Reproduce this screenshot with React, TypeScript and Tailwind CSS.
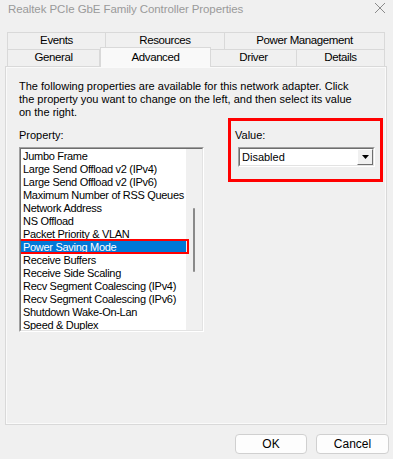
import React from "react";

const items = [
  "Jumbo Frame",
  "Large Send Offload v2 (IPv4)",
  "Large Send Offload v2 (IPv6)",
  "Maximum Number of RSS Queues",
  "Network Address",
  "NS Offload",
  "Packet Priority & VLAN",
  "Power Saving Mode",
  "Receive Buffers",
  "Receive Side Scaling",
  "Recv Segment Coalescing (IPv4)",
  "Recv Segment Coalescing (IPv6)",
  "Shutdown Wake-On-Lan",
  "Speed & Duplex",
];

const tabCls =
  "flex items-center justify-center border-t border-l border-r border-[#d9d9d9] bg-[#f0f0f0] text-[11.5px] text-black h-[17px] tracking-[-0.4px]";

export default function App() {
  return (
    <div
      className="w-[393px] h-[459px] bg-[#f0f0f0] overflow-hidden flex flex-col"
      style={{ fontFamily: '"Liberation Sans", Arial, sans-serif' }}
    >
      {/* title bar */}
      <div className="h-[20px] flex items-center justify-between pl-[8px] pr-[5px]">
        <span className="text-[11.5px] text-[#9a9a9a] tracking-[-0.1px]">
          Realtek PCIe GbE Family Controller Properties
        </span>
        <svg width="12" height="12" viewBox="0 0 12 12" className="mt-[-4px] mr-[2px]">
          <path d="M1 1 L11 11 M11 1 L1 11" stroke="#8a8a8a" strokeWidth="1" />
        </svg>
      </div>

      {/* tabs */}
      <div className="mt-[12px] ml-[7px] w-[378px] flex">
        <div className={`${tabCls} w-[99px]`}>Events</div>
        <div className={`${tabCls} w-[119px] border-l-0`}>Resources</div>
        <div className={`${tabCls} w-[160px] border-l-0`}>Power Management</div>
      </div>
      <div className="ml-[7px] w-[378px] flex items-end h-[17px]">
        <div className={`${tabCls} w-[93px]`}>General</div>
        <div className="relative z-10 w-[111px] h-[20px] -mt-[3px] bg-[#f9f9f9] border-t border-l border-r border-[#d9d9d9] flex items-start justify-center pt-[1px] text-[11.5px] tracking-[-0.4px] text-black mb-[-1px]">
          Advanced
        </div>
        <div className={`${tabCls} w-[86px] border-l-0`}>Driver</div>
        <div className={`${tabCls} w-[88px] border-l-0`}>Details</div>
      </div>

      {/* panel */}
      <div className="ml-[5px] w-[382px] h-[359px] border border-[#d9d9d9] bg-[#f0f0f0] shadow-[inset_0_0_0_1px_#fafafa] pt-[13px] pl-[13px]">
        <p className="text-[11px] leading-[13px] text-black w-[345px]">
          The following properties are available for this network adapter. Click
          the property you want to change on the left, and then select its value
          on the right.
        </p>
        <div className="flex mt-[-1px]">
          <div className="w-[185px] pt-[11px] flex flex-col">
            <span className="text-[11px] leading-[13px] text-black">Property:</span>
            <div className="mt-[5px] h-[185px] border-t border-l border-[#a0a0a0] border-r border-b border-r-white border-b-white">
              <div className="relative h-full border-t border-l border-[#6e6e6e] border-r border-b border-r-[#e3e3e3] border-b-[#e3e3e3] bg-white flex overflow-hidden">
                <div className="flex-1 flex flex-col pt-[1px] overflow-hidden">
                  {items.map((it) => (
                    <div
                      key={it}
                      className={
                        it === "Power Saving Mode"
                          ? "h-[13px] leading-[13px] text-[11px] tracking-[-0.3px] pl-[2px] bg-[#0078d7] text-white whitespace-nowrap"
                          : "h-[13px] leading-[13px] text-[11px] tracking-[-0.3px] pl-[2px] text-black whitespace-nowrap"
                      }
                    >
                      {it}
                    </div>
                  ))}
                </div>
                <div className="w-[16px] bg-[#f0f0f0] relative">
                  <div className="absolute left-[7px] top-[59px] w-[2px] h-[64px] rounded-full bg-[#8a8a8a]" />
                </div>
                <div className="absolute left-[-4px] top-[90px] w-[172px] h-[15px] border-2 border-[#ff0000]" />
              </div>
            </div>
          </div>
          <div className="ml-[24px] w-[155px] h-[64px] border-[3px] border-[#ff0000] pt-[8px] pl-[4px]">
            <span className="block text-[11px] leading-[13px] text-black">Value:</span>
            <div className="mt-[5px] ml-[3px] w-[137px] h-[20px] border-t border-l border-[#a0a0a0] border-r border-b border-r-white border-b-white">
              <div className="h-full flex border-t border-l border-[#6e6e6e] border-r border-b border-r-[#e3e3e3] border-b-[#e3e3e3] bg-white">
                <span className="flex-1 text-[11px] leading-[16px] pl-[2px] text-black">Disabled</span>
                <div className="w-[16px] h-full bg-[#f0f0f0] border border-t-white border-l-white border-r-[#6e6e6e] border-b-[#6e6e6e] flex items-center justify-center">
                  <svg width="7" height="4" viewBox="0 0 7 4">
                    <path d="M0 0 H7 L3.5 4 Z" fill="#000" />
                  </svg>
                </div>
              </div>
            </div>
          </div>
        </div>
      </div>

      {/* buttons */}
      <div className="flex justify-end gap-[9px] pr-[4px] mt-[9px]">
        <button className="w-[72px] h-[20px] rounded-[4px] border border-[#d0d0d0] bg-[#fdfdfd] text-[12px] text-black flex items-center justify-center">
          OK
        </button>
        <button className="w-[73px] h-[20px] rounded-[4px] border border-[#d0d0d0] bg-[#fdfdfd] text-[12px] text-black flex items-center justify-center">
          Cancel
        </button>
      </div>
    </div>
  );
}
